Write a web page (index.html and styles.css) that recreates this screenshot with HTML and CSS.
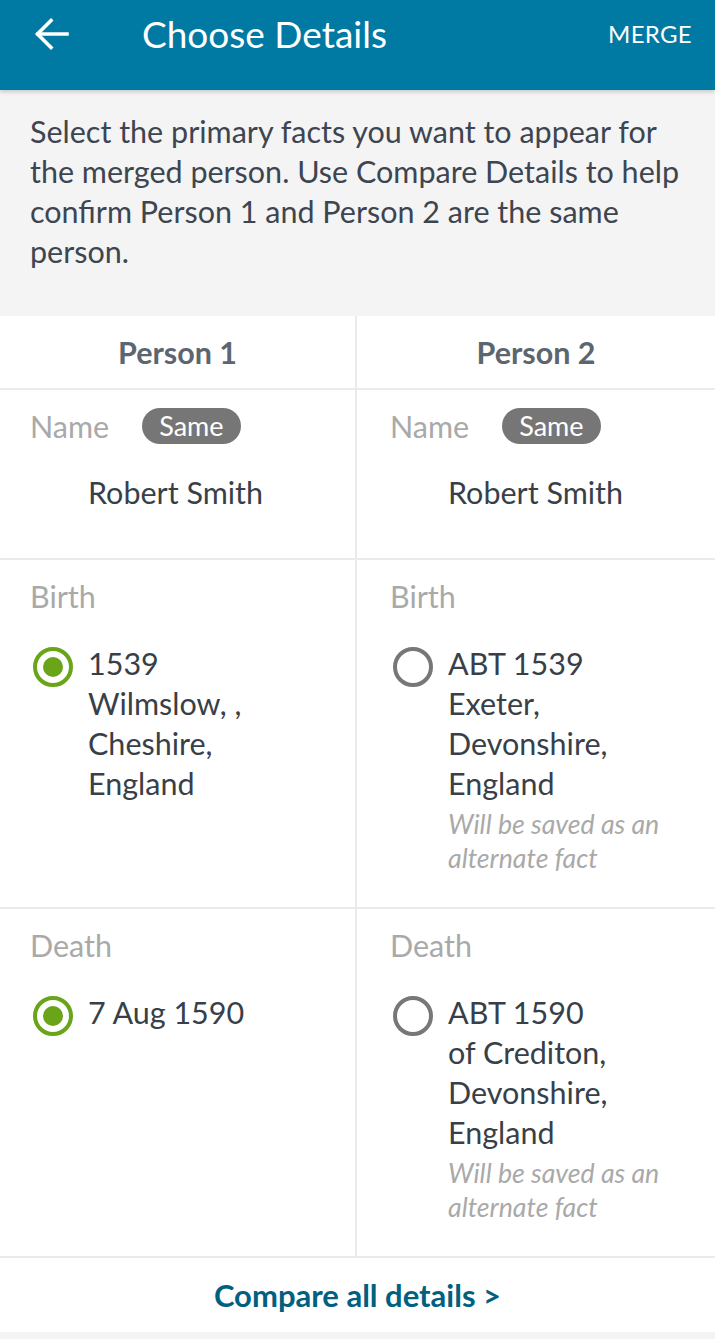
FILE: index.html
```html
<!DOCTYPE html>
<html lang="en">
<head>
<meta charset="utf-8">
<title>Choose Details</title>
<link rel="stylesheet" href="styles.css">
</head>
<body>
<div class="app">
  <header class="topbar">
    <button class="back" aria-label="Back">
      <svg width="36" height="36" viewBox="0 0 36 36" fill="none" stroke="#fff" stroke-width="3.6" stroke-linecap="square" stroke-linejoin="miter">
        <path d="M33 18 H4"/>
        <path d="M17 4.5 L3.5 18 L17 31.5"/>
      </svg>
    </button>
    <h1 class="title">Choose Details</h1>
    <span class="merge">MERGE</span>
  </header>

  <section class="intro">
    <p>Select the primary facts you want to appear for the merged person. Use Compare Details to help confirm Person 1 and Person 2 are the same person.</p>
  </section>

  <div class="table">
    <div class="row head">
      <div class="cell">Person 1</div>
      <div class="cell">Person 2</div>
    </div>

    <div class="row">
      <div class="cell">
        <div class="label-line"><span class="label">Name</span><span class="badge">Same</span></div>
        <div class="name-value">Robert Smith</div>
      </div>
      <div class="cell">
        <div class="label-line"><span class="label">Name</span><span class="badge">Same</span></div>
        <div class="name-value">Robert Smith</div>
      </div>
    </div>

    <div class="row">
      <div class="cell">
        <div class="label-line"><span class="label">Birth</span></div>
        <div class="option">
          <span class="radio checked"></span>
          <div class="fact">
            <div>1539</div>
            <div>Wilmslow, , Cheshire, England</div>
          </div>
        </div>
      </div>
      <div class="cell">
        <div class="label-line"><span class="label">Birth</span></div>
        <div class="option">
          <span class="radio"></span>
          <div class="fact">
            <div>ABT 1539</div>
            <div>Exeter, Devonshire, England</div>
            <div class="alt">Will be saved as an alternate fact</div>
          </div>
        </div>
      </div>
    </div>

    <div class="row">
      <div class="cell">
        <div class="label-line"><span class="label">Death</span></div>
        <div class="option">
          <span class="radio checked"></span>
          <div class="fact">
            <div>7 Aug 1590</div>
          </div>
        </div>
      </div>
      <div class="cell">
        <div class="label-line"><span class="label">Death</span></div>
        <div class="option">
          <span class="radio"></span>
          <div class="fact">
            <div>ABT 1590</div>
            <div>of Crediton, Devonshire, England</div>
            <div class="alt">Will be saved as an alternate fact</div>
          </div>
        </div>
      </div>
    </div>

    <div class="footer">
      <a class="compare" href="#">Compare all details &gt;</a>
    </div>
  </div>
</div>
</body>
</html>
```

FILE: styles.css
```css
* { box-sizing: border-box; }

html, body {
  margin: 0;
  padding: 0;
  background: #f4f4f4;
}

body {
  font-family: Lato, "Liberation Sans", sans-serif;
  color: #3a414a;
}

.app {
  width: 715px;
  min-height: 1339px;
  background: #f4f4f4;
}

.topbar {
  height: 90px;
  background: #0079a3;
  display: flex;
  align-items: flex-start;
  padding-top: 16px;
  box-shadow: 0 2px 4px rgba(0, 0, 0, 0.18);
  position: relative;
  z-index: 1;
}

.back {
  width: 36px;
  height: 36px;
  padding: 0;
  margin: 0 0 0 34px;
  border: 0;
  background: none;
  display: flex;
}

.title {
  margin: -1px 0 0 72px;
  font-size: 37px;
  font-weight: 400;
  color: #fff;
  line-height: 38px;
}

.merge {
  margin-left: auto;
  margin-right: 23px;
  font-size: 24px;
  line-height: 36px;
  color: #fff;
  letter-spacing: 0.3px;
}

.intro {
  padding: 21px 22px 45px 30px;
}

.intro p {
  margin: 0;
  font-size: 30.5px;
  line-height: 40px;
  color: #3d4550;
}

.table {
  background: #fff;
}

.row {
  display: grid;
  grid-template-columns: 357px 1fr;
  border-bottom: 2px solid #ebebeb;
}

.cell {
  padding: 18px 32px 32px 30px;
}

.row .cell:first-child {
  border-right: 2px solid #ebebeb;
}

.row .cell:last-child {
  padding-left: 33px;
}

.row.head .cell {
  padding: 0;
  height: 72px;
  display: flex;
  align-items: center;
  justify-content: center;
  font-size: 30.5px;
  font-weight: 700;
  color: #5b6670;
}

.label-line {
  display: flex;
  align-items: center;
  height: 36px;
}

.label {
  font-size: 30.5px;
  line-height: 36px;
  color: #a9a9a9;
}

.badge {
  margin-left: 33px;
  height: 36px;
  padding: 0 17px;
  border-radius: 18px;
  background: #767676;
  color: #fff;
  font-size: 27px;
  line-height: 36px;
}

.name-value {
  margin-top: 28px;
  margin-left: 58px;
  margin-bottom: 14px;
  font-size: 30.5px;
  line-height: 40px;
  color: #383f48;
}

.option {
  margin-top: 29px;
  display: flex;
  align-items: flex-start;
}

.radio {
  flex: none;
  width: 40px;
  height: 40px;
  margin: 4px 15px 0 3px;
  border-radius: 50%;
  border: 4px solid #777;
  position: relative;
}

.radio.checked {
  border-color: #6aa419;
}

.radio.checked::after {
  content: "";
  position: absolute;
  left: 6px;
  top: 6px;
  width: 20px;
  height: 20px;
  border-radius: 50%;
  background: #6aa419;
}

.fact {
  font-size: 30.5px;
  line-height: 40px;
  color: #383f48;
}

.alt {
  margin-top: 4px;
  font-size: 26.7px;
  line-height: 34px;
  font-style: italic;
  color: #a9a9a9;
}

.footer {
  height: 74px;
  display: flex;
  align-items: center;
  justify-content: center;
  background: #fff;
}

.compare {
  font-size: 31px;
  font-weight: 700;
  color: #00607f;
  text-decoration: none;
}
```
